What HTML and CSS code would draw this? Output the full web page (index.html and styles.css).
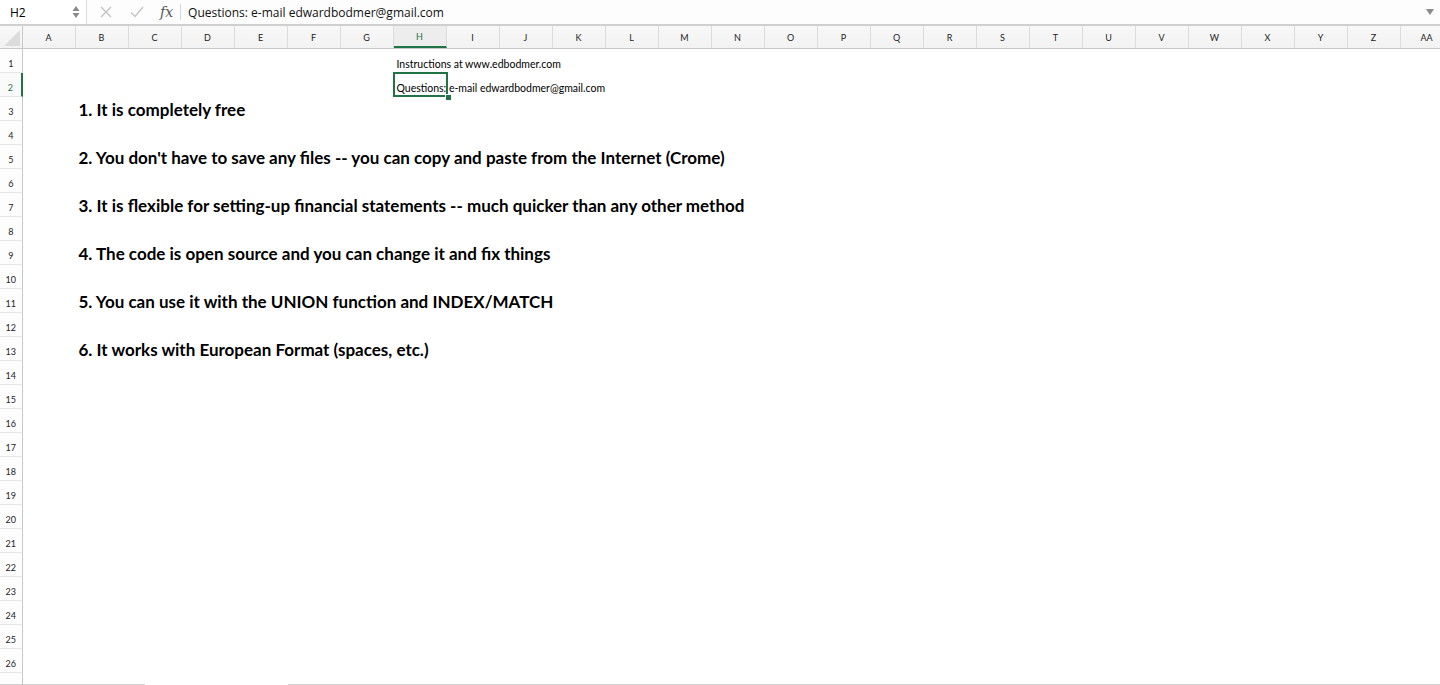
FILE: index.html
```html
<!DOCTYPE html>
<html>
<head>
<meta charset="utf-8">
<link rel="stylesheet" href="styles.css">
</head>
<body>
<div class="app">
  <div class="formula-bar">
    <div class="namebox">
      <span class="name">H2</span>
      <span class="spinner"><svg width="8" height="14" viewBox="0 0 8 14"><polygon points="4,1 7.5,6 0.5,6" fill="#8a8a8a"/><polygon points="0.5,8 7.5,8 4,13" fill="#8a8a8a"/></svg></span>
    </div>
    <div class="fx-tools">
      <svg class="tool" width="12" height="12" viewBox="0 0 12 12"><path d="M1 1 L11 11 M11 1 L1 11" stroke="#c4c4c4" stroke-width="1.4" fill="none"/></svg>
      <svg class="tool" width="14" height="12" viewBox="0 0 14 12"><path d="M1 6.5 L5 10.5 L13 1" stroke="#c4c4c4" stroke-width="1.4" fill="none"/></svg>
      <span class="fx">fx</span>
    </div>
    <div class="formula">Questions: e-mail edwardbodmer@gmail.com</div>
    <div class="dropdown"><svg width="8" height="6" viewBox="0 0 8 6"><polygon points="0,0 8,0 4,6" fill="#8a8a8a"/></svg></div>
  </div>

  <div class="sheet">
    <div class="col-headers">
      <div class="corner"><svg width="16" height="16" viewBox="0 0 16 16"><polygon points="16,0 16,16 0,16" fill="#dcdcdc"/></svg></div>
      <div class="ch">A</div><div class="ch">B</div><div class="ch">C</div><div class="ch">D</div><div class="ch">E</div><div class="ch">F</div><div class="ch">G</div><div class="ch active">H</div><div class="ch">I</div><div class="ch">J</div><div class="ch">K</div><div class="ch">L</div><div class="ch">M</div><div class="ch">N</div><div class="ch">O</div><div class="ch">P</div><div class="ch">Q</div><div class="ch">R</div><div class="ch">S</div><div class="ch">T</div><div class="ch">U</div><div class="ch">V</div><div class="ch">W</div><div class="ch">X</div><div class="ch">Y</div><div class="ch">Z</div><div class="ch">AA</div>
    </div>

    <div class="rows">
      <div class="row"><div class="rh">1</div><div class="cell small col-h">Instructions at www.edbodmer.com</div></div>
      <div class="row"><div class="rh active">2</div><div class="cell small col-h selected">Questions: e-mail edwardbodmer@gmail.com</div></div>
      <div class="row"><div class="rh">3</div><div class="cell big col-b">1. It is completely free</div></div>
      <div class="row"><div class="rh">4</div></div>
      <div class="row"><div class="rh">5</div><div class="cell big col-b">2. You don't have to save any files -- you can copy and paste from the Internet (Crome)</div></div>
      <div class="row"><div class="rh">6</div></div>
      <div class="row"><div class="rh">7</div><div class="cell big col-b">3. It is flexible for setting-up financial statements -- much quicker than any other method</div></div>
      <div class="row"><div class="rh">8</div></div>
      <div class="row"><div class="rh">9</div><div class="cell big col-b">4. The code is open source and you can change it and fix things</div></div>
      <div class="row"><div class="rh">10</div></div>
      <div class="row"><div class="rh">11</div><div class="cell big col-b">5. You can use it with the UNION function and INDEX/MATCH</div></div>
      <div class="row"><div class="rh">12</div></div>
      <div class="row"><div class="rh">13</div><div class="cell big col-b">6. It works with European Format (spaces, etc.)</div></div>
      <div class="row"><div class="rh">14</div></div>
      <div class="row"><div class="rh">15</div></div>
      <div class="row"><div class="rh">16</div></div>
      <div class="row"><div class="rh">17</div></div>
      <div class="row"><div class="rh">18</div></div>
      <div class="row"><div class="rh">19</div></div>
      <div class="row"><div class="rh">20</div></div>
      <div class="row"><div class="rh">21</div></div>
      <div class="row"><div class="rh">22</div></div>
      <div class="row"><div class="rh">23</div></div>
      <div class="row"><div class="rh">24</div></div>
      <div class="row"><div class="rh">25</div></div>
      <div class="row"><div class="rh">26</div></div>
      <div class="row"><div class="rh"></div></div>
    </div>
  </div>

  <div class="hscroll">
    <div class="seg seg-left"></div>
    <div class="seg seg-gap"></div>
    <div class="seg seg-right"></div>
  </div>
</div>
</body>
</html>
```

FILE: styles.css
```css
* { box-sizing: border-box; }
html, body {
  margin: 0;
  padding: 0;
  background: #ffffff;
}
body {
  width: 1440px;
  height: 685px;
  overflow: hidden;
  font-family: "Lato", "Open Sans", sans-serif;
  color: #000;
}
.app {
  display: flex;
  flex-direction: column;
  height: 685px;
}

/* formula bar */
.formula-bar {
  display: flex;
  align-items: center;
  height: 26px;
  border-bottom: 2px solid #cfcfcf;
  background: #fdfdfd;
  flex: none;
}
.namebox {
  width: 87px;
  height: 100%;
  display: flex;
  align-items: center;
  justify-content: space-between;
  padding: 0 6px 0 10px;
  border-right: 1px solid #dcdcdc;
  background: #fff;
}
.name {
  font-family: "Open Sans", sans-serif;
  font-size: 12px;
}
.spinner { display: flex; }
.fx-tools {
  display: flex;
  align-items: center;
  height: 100%;
  padding-left: 13px;
}
.tool { margin-right: 18px; }
.tool + .tool { margin-right: 16px; }
.fx {
  font-family: "DejaVu Serif", "Liberation Serif", serif;
  font-style: italic;
  font-size: 14px;
  color: #555;
  padding-right: 7px;
  border-right: 1px solid #d8d8d8;
  line-height: 16px;
}
.formula {
  flex: 1;
  font-family: "Open Sans", sans-serif;
  font-size: 12px;
  padding-left: 7px;
  color: #111;
}
.dropdown {
  width: 20px;
  display: flex;
  justify-content: center;
}

/* sheet */
.sheet {
  flex: 1;
  display: flex;
  flex-direction: column;
  overflow: hidden;
}
.col-headers {
  display: grid;
  grid-template-columns: 22.5px repeat(27, 53px);
  height: 23px;
  flex: none;
  background: linear-gradient(#f8f8f8, #f2f2f2);
  border-bottom: 1px solid #c8c8c8;
}
.corner {
  display: flex;
  align-items: flex-end;
  justify-content: flex-end;
  padding: 0 2px 2px 0;
  border-right: 1px solid #c8c8c8;
}
.ch {
  display: flex;
  align-items: center;
  justify-content: center;
  font-size: 9px;
  color: #222;
  border-right: 1px solid #dcdcdc;
}
.ch.active {
  color: #217346;
  background: #ededed;
  border-bottom: 2px solid #217346;
}
.rows {
  flex: 1;
  overflow: hidden;
}
.row {
  display: grid;
  grid-template-columns: 22.5px repeat(27, 53px);
  height: 24px;
}
.rh {
  background: #fdfdfd;
  border-right: 1px solid #c8c8c8;
  border-bottom: 1px solid #e6e6e6;
  display: flex;
  align-items: flex-end;
  justify-content: center;
  padding-bottom: 3px;
  font-size: 9px;
  color: #222;
  grid-column: 1;
}
.rh.active {
  color: #217346;
  background: #fafafa;
  border-right: 2px solid #217346;
}
.cell {
  white-space: nowrap;
  display: flex;
  align-items: flex-end;
  grid-row: 1;
}
.col-b { grid-column: 3 / -1; padding-left: 3px; }
.col-h { grid-column: 9 / -1; padding-left: 3px; }
.small {
  font-size: 10.5px;
  padding-bottom: 3px;
}
.big {
  font-size: 17px;
  font-weight: 700;
  padding-bottom: 1px;
}
.selected { position: relative; }
.selected::after {
  content: "";
  position: absolute;
  left: -1px;
  top: -1px;
  width: 55px;
  height: 25px;
  border: 2px solid #217346;
  box-sizing: border-box;
}
.selected::before {
  content: "";
  position: absolute;
  left: 51px;
  top: 21px;
  width: 5px;
  height: 5px;
  background: #217346;
  border: 1px solid #fff;
  z-index: 2;
}

/* bottom scrollbar edge */
.hscroll {
  display: flex;
  height: 1px;
  flex: none;
}
.seg-left { width: 145px; background: #cfcfcf; }
.seg-gap { width: 143px; background: #fff; }
.seg-right { flex: 1; background: #cfcfcf; }
```
